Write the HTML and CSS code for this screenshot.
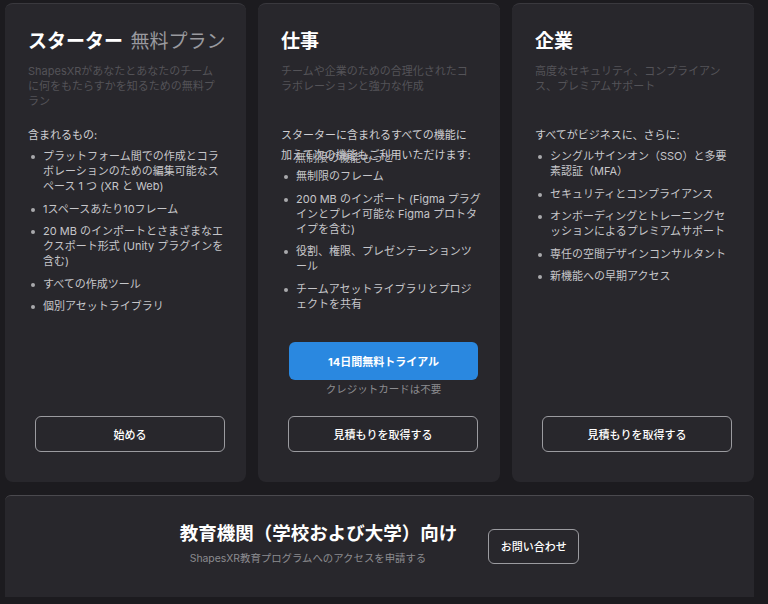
FILE: index.html
```html
<!DOCTYPE html>
<html lang="ja">
<head>
    <meta charset="UTF-8">
    <title>料金プラン</title>
    <link rel="stylesheet" href="styles.css">
</head>
<body>
<div class="page">
    <div class="plans">
        <div class="plan">
            <h2 class="plan-title">スターター <span class="plan-sub">無料プラン</span></h2>
            <p class="plan-desc">ShapesXRがあなたとあなたのチームに何をもたらすかを知るための無料プラン</p>
            <p class="plan-lead">含まれるもの:</p>
            <ul class="plan-list">
                <li>プラットフォーム間での作成とコラボレーションのための編集可能なスペース 1 つ (XR と Web)</li>
                <li>1スペースあたり10フレーム</li>
                <li>20 MB のインポートとさまざまなエクスポート形式 (Unity プラグインを含む)</li>
                <li>すべての作成ツール</li>
                <li>個別アセットライブラリ</li>
            </ul>
            <div class="plan-actions">
                <a class="btn btn-outline">始める</a>
            </div>
        </div>

        <div class="plan">
            <h2 class="plan-title">仕事</h2>
            <p class="plan-desc">チームや企業のための合理化されたコラボレーションと強力な作成</p>
            <p class="plan-lead">スターターに含まれるすべての機能に<br><span class="glitch">加えて次の機能もご利用いただけます:<span class="glitch-over">無制限の機能もっと</span></span></p>
            <ul class="plan-list">
                <li>無制限のフレーム</li>
                <li>200 MB のインポート (Figma プラグインとプレイ可能な Figma プロトタイプを含む)</li>
                <li>役割、権限、プレゼンテーションツール</li>
                <li>チームアセットライブラリとプロジェクトを共有</li>
            </ul>
            <div class="trial">
                <a class="btn btn-primary">14日間無料トライアル</a>
                <p class="trial-note">クレジットカードは不要</p>
            </div>
            <div class="plan-actions">
                <a class="btn btn-outline">見積もりを取得する</a>
            </div>
        </div>

        <div class="plan">
            <h2 class="plan-title">企業</h2>
            <p class="plan-desc">高度なセキュリティ、コンプライアンス、プレミアムサポート</p>
            <p class="plan-lead">すべてがビジネスに、さらに:</p>
            <ul class="plan-list">
                <li>シングルサインオン（SSO）と多要素認証（MFA）</li>
                <li>セキュリティとコンプライアンス</li>
                <li>オンボーディングとトレーニングセッションによるプレミアムサポート</li>
                <li>専任の空間デザインコンサルタント</li>
                <li>新機能への早期アクセス</li>
            </ul>
            <div class="plan-actions">
                <a class="btn btn-outline">見積もりを取得する</a>
            </div>
        </div>
    </div>

    <div class="edu">
        <div class="edu-text">
            <h2 class="edu-title">教育機関（学校および大学）向け</h2>
            <p class="edu-desc">ShapesXR教育プログラムへのアクセスを申請する</p>
        </div>
        <a class="btn btn-outline btn-small">お問い合わせ</a>
    </div>
</div>
</body>
</html>
```

FILE: styles.css
```css
html, body {
    margin: 0;
    background-color: #1c1b1f;
}
body {
    font-family: "Inter", "Noto Sans CJK JP", sans-serif;
    color: #c6c6ca;
}
.page {
    width: 749px;
    padding: 3px 14px 0 5px;
}
.plans {
    display: grid;
    grid-template-columns: 241px 242px 242px;
    gap: 12px;
}
.plan {
    height: 479px;
    box-sizing: border-box;
    padding: 24px 19px 30px 23px;
    background-color: #28272c;
    border-top: 1px solid #3a393e;
    border-radius: 8px;
    display: flex;
    flex-direction: column;
}
.plan-title {
    margin: 0;
    font-size: 19px;
    line-height: 28px;
    font-weight: 700;
    color: #ffffff;
    white-space: nowrap;
}
.plan-sub {
    margin-left: 3px;
    font-weight: 400;
    color: #9a9a9f;
}
.plan-desc {
    margin: 8px 0 0;
    max-width: 194px;
    min-height: 46px;
    font-size: 11px;
    line-height: 15px;
    color: #545358;
}
.plan-lead {
    margin: 15px 0 0;
    font-size: 11px;
    line-height: 20px;
    color: #cfcfd3;
    white-space: nowrap;
}
.glitch {
    position: relative;
}
.glitch-over {
    position: absolute;
    left: 14px;
    top: 0;
    white-space: nowrap;
    color: #bdbdc1;
}
.plan-list {
    margin: 4px 0 0;
    padding: 0;
    list-style: none;
    font-size: 11px;
    line-height: 15px;
}
.plan-list li {
    position: relative;
    padding-left: 15px;
    margin-bottom: 7.5px;
}
.plan-list li::before {
    content: "";
    position: absolute;
    left: 3px;
    top: 6px;
    width: 4px;
    height: 4px;
    border-radius: 50%;
    background-color: #a9a9ad;
}
.trial {
    margin-top: 23px;
    text-align: center;
    width: 189px;
    margin-left: 8px;
}
.trial-note {
    margin: 3px 0 0;
    font-size: 10.5px;
    line-height: 14px;
    color: #8c8c90;
}
.plan-actions {
    margin-top: auto;
    padding-left: 7px;
}
.btn {
    display: flex;
    align-items: center;
    justify-content: center;
    box-sizing: border-box;
    font-size: 11px;
    font-weight: 700;
    color: #ffffff;
    border-radius: 6px;
    text-decoration: none;
}
.btn-primary {
    height: 38px;
    background-color: #2a88e0;
}
.btn-outline {
    width: 190px;
    height: 36px;
    border: 1px solid #9b9ba0;
    font-weight: 500;
}
.edu {
    margin-top: 13px;
    height: 102px;
    box-sizing: border-box;
    background-color: #28272c;
    border-top: 1px solid #4a494e;
    border-radius: 6px 6px 0 0;
    display: flex;
    align-items: center;
    justify-content: center;
    gap: 31px;
}
.edu-text {
    text-align: center;
    margin-bottom: 8px;
}
.edu-title {
    margin: 0;
    font-size: 18.5px;
    line-height: 26px;
    font-weight: 700;
    color: #ffffff;
}
.edu-desc {
    margin: 6px 21px 0 0;
    font-size: 10.4px;
    line-height: 14px;
    color: #8c8c90;
}
.btn-small {
    width: 91px;
    height: 35px;
    margin-top: -1px;
}
```
